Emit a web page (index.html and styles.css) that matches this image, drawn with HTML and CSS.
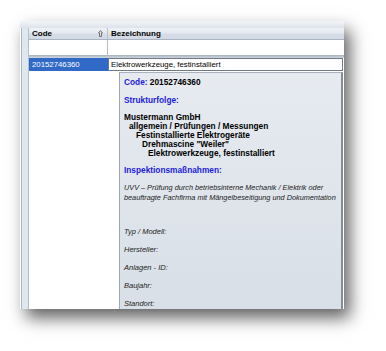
FILE: index.html
```html
<!DOCTYPE html>
<html lang="de">
<head>
<meta charset="utf-8">
<title>Grid</title>
<link rel="stylesheet" href="styles.css">
</head>
<body>
<div class="window">
  <div class="topbar"></div>
  <div class="main">
    <div class="rail"></div>
    <div class="grid">
      <div class="hdr">
        <div class="hcell code">
          <span>Code</span>
          <svg class="sort" width="5" height="7" viewBox="0 0 5 7"><path d="M2.5 0.5 L4.5 3 L3.5 3 L3.5 6.5 L1.5 6.5 L1.5 3 L0.5 3 Z" fill="none" stroke="#555" stroke-width="0.8"/></svg>
        </div>
        <div class="hcell bez">Bezeichnung</div>
      </div>
      <div class="filter">
        <div class="fcell code"></div>
        <div class="fcell bez"></div>
      </div>
      <div class="sep"></div>
      <div class="row">
        <div class="cell code sel">20152746360</div>
        <div class="cell bez edit">Elektrowerkzeuge, festinstalliert</div>
      </div>
      <div class="rest"></div>
    </div>
  </div>
  <div class="tip">
    <div class="line b first"><span class="blue">Code:</span> 20152746360</div>
    <div class="line b blue gap1">Strukturfolge:</div>
    <div class="tree">
      <div class="line b">Mustermann GmbH</div>
      <div class="line b l1">allgemein / Prüfungen / Messungen</div>
      <div class="line b l2">Festinstallierte Elektrogeräte</div>
      <div class="line b l3">Drehmascine "Weiler"</div>
      <div class="line b l4">Elektrowerkzeuge, festinstalliert</div>
    </div>
    <div class="line b blue gap2">Inspektionsmaßnahmen:</div>
    <div class="desc">UVV – Prüfung durch betriebsinterne Mechanik / Elektrik oder<br>beauftragte Fachfirma mit Mängelbeseitigung und Dokumentation</div>
    <div class="labels">
      <div class="lbl">Typ / Modell:</div>
      <div class="lbl">Hersteller:</div>
      <div class="lbl">Anlagen - ID:</div>
      <div class="lbl">Baujahr:</div>
      <div class="lbl">Standort:</div>
    </div>
  </div>
</div>
</body>
</html>
```
FILE: styles.css
```css
* { box-sizing: border-box; }
html, body { margin: 0; padding: 0; background: #fff; }
body {
  font-family: "Liberation Sans", Arial, sans-serif;
  color: #111;
  width: 386px;
  height: 351px;
  overflow: hidden;
}
.window {
  position: relative;
  margin: 21px 0 0 20px;
  width: 324px;
  height: 288px;
  display: flex;
  flex-direction: column;
  background: #fff;
  box-shadow: 6px 9px 16px rgba(0,0,0,0.62);
}
.topbar {
  height: 7px;
  background: linear-gradient(#f3f5f8, #dde2e9);
}
.main {
  flex: 1;
  display: flex;
}
.rail {
  width: 8px;
  border-left: 1px solid #aab5c3;
  border-right: 1px solid #b4bfcc;
  background: #e1e7ef;
  margin-left: 1px;
}
.grid {
  flex: 1;
  display: flex;
  flex-direction: column;
}
.hdr {
  height: 12px;
  display: flex;
  background: linear-gradient(#eef1f5 0%, #e6eaf0 45%, #d6dde6 55%, #d2d9e2 100%);
  border-bottom: 1px solid #a9b5c4;
  font-weight: bold;
  font-size: 8px;
  line-height: 11px;
  color: #000;
}
.hcell { padding-left: 3px; }
.code { width: 79px; flex: none; }
.bez { flex: 1; }
.hcell.code {
  display: flex;
  justify-content: space-between;
  align-items: center;
  padding-right: 4px;
  border-right: 1px solid #b9c3cf;
}
.sort { display: block; }
.filter {
  height: 15px;
  display: flex;
  background: #fff;
}
.fcell.code { border-right: 1px solid #b3bcc7; }
.sep {
  height: 3px;
  background: linear-gradient(#a9b3bf, #cfd6de);
}
.row {
  height: 13px;
  display: flex;
  font-size: 7.8px;
  line-height: 13px;
}
.cell { padding-left: 3px; white-space: nowrap; }
.sel {
  background: #3169c6;
  color: #fff;
}
.edit {
  background: #fff;
  border: 1px solid #6f7a86;
  line-height: 11px;
  padding-left: 2px;
  margin-right: 1px;
  color: #000;
}
.rest { flex: 1; background: #fff; }

.tip {
  position: absolute;
  left: 99px;
  top: 51px;
  width: 224px;
  bottom: 0;
  background: linear-gradient(#e7ebf0, #d8dfe7);
  border-left: 1px solid #9da7b3;
  border-top: 1px solid #a9b1bc;
  border-right: 2px solid #848c96;
  padding-left: 4px;
  display: flex;
  flex-direction: column;
  font-size: 8.3px;
  color: #000;
}
.line { line-height: 9px; white-space: nowrap; }
.b { font-weight: bold; }
.blue { color: #1c1cdc; }
.first { margin-top: 4.5px; }
.gap1 { margin-top: 9.5px; }
.tree { margin-top: 8px; }
.l1 { padding-left: 5px; }
.l2 { padding-left: 12px; }
.l3 { padding-left: 18px; }
.l4 { padding-left: 24px; }
.gap2 { margin-top: 8px; }
.desc {
  margin-top: 7.5px;
  font-style: italic;
  font-size: 7.3px;
  line-height: 10px;
  color: #222;
  white-space: nowrap;
}
.labels {
  margin-top: 24px;
  display: flex;
  flex-direction: column;
  gap: 8px;
}
.lbl {
  font-style: italic;
  font-size: 7.5px;
  line-height: 10px;
  color: #222;
}
```
